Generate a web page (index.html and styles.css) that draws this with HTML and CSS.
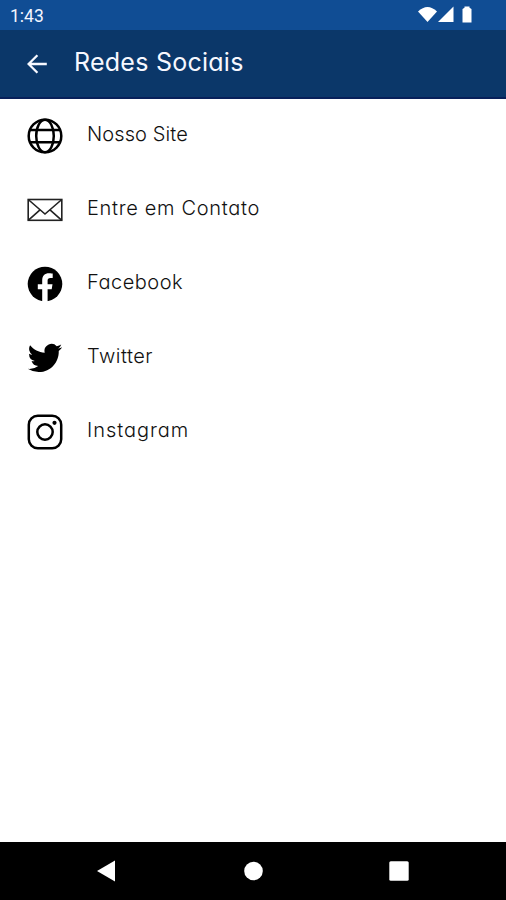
FILE: index.html
```html
<!DOCTYPE html>
<html lang="pt-br">
<head>
  <meta charset="UTF-8">
  <title>Redes Sociais</title>
  <link rel="stylesheet" href="styles.css">
</head>
<body>
  <div class="status">
    <span class="hora">1:43</span>
    <svg class="status-icones" width="56" height="18" viewBox="0 0 56 18">
      <path d="M0 5.5 Q9.5 -3.5 19 5.5 L9.5 16 Z"/>
      <path d="M20 16 L35.5 0.5 V16 Z"/>
      <path d="M44.5 3 L46.5 1.8 V0.5 H51.5 V1.8 L53.5 3 V16.5 H44.5 Z"/>
    </svg>
  </div>

  <header class="topo">
    <svg class="voltar" width="20" height="20" viewBox="0 0 20 20">
      <path d="M19.8 10 H1.5 M10.4 1.2 L1.6 10 L10.4 18.8"/>
    </svg>
    <h1>Redes Sociais</h1>
  </header>

  <main class="lista">
    <a class="item">
      <svg class="icone linha" viewBox="0 0 36 36">
        <circle cx="18" cy="18" r="16.3"/>
        <ellipse cx="18" cy="18" rx="8.8" ry="16.3"/>
        <path d="M3 12 H33 M3 24.2 H33"/>
      </svg>
      <span class="site">Nosso Site</span>
    </a>
    <a class="item">
      <svg class="icone carta" viewBox="0 0 36 36">
        <rect x="1.2" y="7.5" width="33.6" height="20.8"/>
        <path d="M1.2 7.5 L18 22 L34.8 7.5 M1.2 28.3 L13 17.8 M34.8 28.3 L23 17.8"/>
      </svg>
      <span class="contato">Entre em Contato</span>
    </a>
    <a class="item">
      <svg class="icone" viewBox="0 0 36 36">
        <circle cx="18" cy="18" r="17.3"/>
        <path class="branco" d="M15.2 36 V23.3 H10.8 V18.2 H15.2 V14.3 C15.2 9.8 17.8 7.3 22 7.3 C23.7 7.3 25.7 7.6 25.7 7.6 V12 H23.4 C21.3 12 20.6 13.2 20.6 14.6 V18.2 H25.5 L24.7 23.3 H20.6 V36 Z"/>
      </svg>
      <span class="facebook">Facebook</span>
    </a>
    <a class="item">
      <svg class="icone" viewBox="-0.5 -0.5 25 25">
        <path d="M23.95 4.57a10 10 0 0 1-2.82.77 4.96 4.96 0 0 0 2.16-2.72c-.95.55-2 .96-3.13 1.18a4.92 4.92 0 0 0-8.38 4.48C7.69 8.1 4.07 6.13 1.64 3.16a4.93 4.93 0 0 0 1.52 6.57 4.9 4.9 0 0 1-2.23-.61v.06a4.92 4.92 0 0 0 3.95 4.83 5 5 0 0 1-2.21.08 4.94 4.94 0 0 0 4.6 3.42A9.87 9.87 0 0 1 0 19.54a14 14 0 0 0 7.55 2.21c9.05 0 14-7.5 14-13.98 0-.21 0-.42-.02-.63a9.94 9.94 0 0 0 2.42-2.57Z"/>
      </svg>
      <span class="twitter">Twitter</span>
    </a>
    <a class="item">
      <svg class="icone linha" viewBox="0 0 36 36">
        <rect x="1.8" y="1.8" width="32.4" height="32.4" rx="9"/>
        <circle cx="18" cy="18" r="7.7"/>
        <circle class="ponto" cx="27.5" cy="8.8" r="2.1"/>
      </svg>
      <span class="instagram">Instagram</span>
    </a>
  </main>

  <nav class="navegacao">
    <svg width="22" height="22" viewBox="0 0 22 22"><path d="M2 11 L20 0.5 V21.5 Z"/></svg>
    <svg width="22" height="22" viewBox="0 0 22 22"><circle cx="11.5" cy="11" r="9.3"/></svg>
    <svg width="22" height="22" viewBox="0 0 22 22"><rect x="1.3" y="1.3" width="19.4" height="19.4" rx="1.5"/></svg>
  </nav>
</body>
</html>
```
FILE: styles.css
```css
* {
  box-sizing: border-box;
}

body {
  margin: 0;
  height: 100vh;
  display: flex;
  flex-direction: column;
  background: white;
  color: #111;
  font-family: Inter, sans-serif;
  font-feature-settings: "cv11";
}

svg {
  display: block;
  flex-shrink: 0;
}

.status {
  height: 30px;
  padding: 0 32px 0 10px;
  display: flex;
  align-items: center;
  justify-content: space-between;
  background: #104d94;
  color: #f4f6ff;
  font-family: Roboto, sans-serif;
  font-size: 17.5px;
}

.hora {
  padding-top: 2px;
}

.status-icones {
  fill: white;
}

.topo {
  height: 69px;
  padding-left: 27px;
  display: flex;
  align-items: center;
  gap: 27px;
  background: #0b3769;
  border-bottom: 2px solid #08205a;
  color: #f7f8ff;
}

.voltar {
  fill: none;
  stroke: #f7f8ff;
  stroke-width: 2.3;
}

.topo h1 {
  margin: 0 0 4px;
  font-size: 25px;
  font-weight: 400;
  line-height: 30px;
  letter-spacing: 0.25px;
}

.lista {
  flex: 1;
}

.item {
  height: 74px;
  padding-left: 27px;
  display: flex;
  align-items: center;
  gap: 24px;
  font-size: 20px;
  font-weight: 300;
}

.item span {
  margin-bottom: 4px;
}

.site {
  letter-spacing: 0.1px;
}

.contato {
  letter-spacing: 0.68px;
}

.facebook,
.twitter {
  letter-spacing: 0.5px;
}

.instagram {
  letter-spacing: 0.95px;
}

.icone {
  width: 36px;
  height: 36px;
  fill: black;
}

.linha {
  fill: none;
  stroke: black;
  stroke-width: 2.5;
}

.linha .ponto {
  fill: black;
  stroke: none;
}

.carta {
  fill: none;
  stroke: #222;
  stroke-width: 1.6;
}

.branco {
  fill: white;
}

.navegacao {
  height: 58px;
  padding: 0 96px 0 95px;
  display: flex;
  align-items: center;
  justify-content: space-between;
  background: black;
  fill: white;
}
```
